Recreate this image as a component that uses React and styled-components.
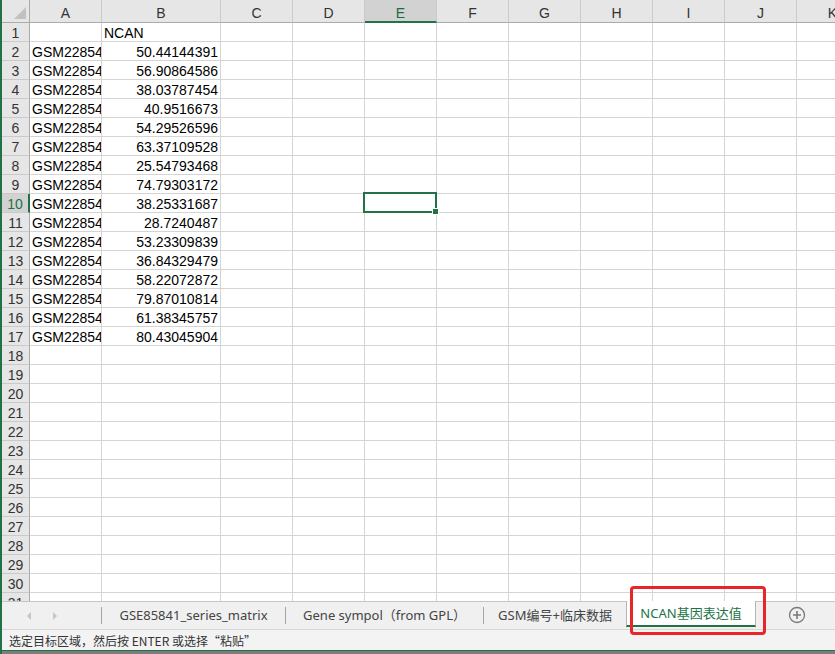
import React from "react"
import styled, { createGlobalStyle } from "styled-components"

const GlobalStyle = createGlobalStyle`
  html, body {
    margin: 0;
    padding: 0;
    overflow: hidden;
    background: #ffffff;
  }
`

const COLS = ["A", "B", "C", "D", "E", "F", "G", "H", "I", "J", "K"]
const WIDTHS = [72, 119, 72, 72, 72, 72, 72, 72, 72, 72, 72]
const ROWS = 31
const ACTIVE_COL = "E"
const ACTIVE_ROW = 10

const values = [
  "50.44144391", "56.90864586", "38.03787454", "40.9516673",
  "54.29526596", "63.37109528", "25.54793468", "74.79303172",
  "38.25331687", "28.7240487", "53.23309839", "36.84329479",
  "58.22072872", "79.87010814", "61.38345757", "80.43045904",
]

const tabs = [
  { name: "GSE85841_series_matrix", width: 184 },
  { name: "Gene sympol（from GPL）", width: 198 },
  { name: "GSM编号+临床数据", width: 143 },
]

const Window = styled.div`
  position: relative;
  width: 835px;
  height: 654px;
  display: flex;
  flex-direction: column;
  border-left: 2px solid #217346;
  box-sizing: border-box;
  font-family: "Liberation Sans", "Noto Sans CJK SC", sans-serif;
  overflow: hidden;
`

const SheetArea = styled.div`
  flex: 1;
  overflow: hidden;
`

const Grid = styled.div`
  display: grid;
  grid-template-columns: 28px ${WIDTHS.map(w => w + "px").join(" ")};
  grid-template-rows: 23px repeat(${ROWS}, 19px);
  width: max-content;
`

const Corner = styled.div`
  position: relative;
  background: #e6e6e6;
  border-right: 1px solid #ababab;
  border-bottom: 1px solid #ababab;
  box-sizing: border-box;

  &::after {
    content: "";
    position: absolute;
    right: 3px;
    bottom: 3px;
    width: 0;
    height: 0;
    border-left: 12px solid transparent;
    border-bottom: 12px solid #c1c1c1;
  }
`

const ColHeader = styled.div`
  display: flex;
  align-items: center;
  justify-content: center;
  padding-top: 4px;
  box-sizing: border-box;
  background: ${p => (p.active ? "#d2d2d2" : "#e6e6e6")};
  color: ${p => (p.active ? "#1e6b40" : "#333")};
  border-right: 1px solid #cacaca;
  border-bottom: ${p => (p.active ? "2px solid #217346" : "1px solid #ababab")};
  font-size: 14px;
`

const RowHeader = styled.div`
  display: flex;
  align-items: center;
  justify-content: center;
  padding-top: 1px;
  box-sizing: border-box;
  background: ${p => (p.active ? "#d2d2d2" : "#e6e6e6")};
  color: ${p => (p.active ? "#217346" : "#333")};
  border-right: ${p => (p.active ? "2px solid #217346" : "1px solid #ababab")};
  border-bottom: 1px solid #cacaca;
  font-size: 14px;
`

const Cell = styled.div`
  position: relative;
  box-sizing: border-box;
  border-right: 1px solid #d4d4d4;
  border-bottom: 1px solid #d4d4d4;
  font-size: 14px;
  line-height: 20px;
  color: #000;
  padding: 0 2px;
  white-space: nowrap;
  overflow: ${p => (p.selected ? "visible" : "hidden")};
  text-align: ${p => (p.align === "right" ? "right" : "left")};
`

const Selection = styled.div`
  position: absolute;
  left: -2px;
  top: -2px;
  right: -1px;
  bottom: -1px;
  border: 2px solid #217346;
  pointer-events: none;
  z-index: 2;

  &::after {
    content: "";
    position: absolute;
    right: -4px;
    bottom: -4px;
    width: 5px;
    height: 5px;
    background: #217346;
    border: 1px solid #fff;
  }
`

const TabBar = styled.div`
  height: 28px;
  display: flex;
  align-items: stretch;
  background: #f0f0f0;
  border-top: 1px solid #c6c6c6;
  box-sizing: border-box;
  font-family: "Noto Sans", "Noto Sans CJK SC", sans-serif;
  font-size: 13px;
`

const NavArrows = styled.div`
  width: 100px;
  display: flex;
  align-items: center;
  gap: 22px;
  padding-left: 25px;
  box-sizing: border-box;
  border-right: 1px solid #a6a6a6;
  margin: 5px 0;
`

const Arrow = styled.span`
  width: 0;
  height: 0;
  border-top: 4px solid transparent;
  border-bottom: 4px solid transparent;
  ${p => (p.left ? "border-right: 4px solid #c6c6c6;" : "border-left: 4px solid #c6c6c6;")}
`

const Tab = styled.div`
  display: flex;
  align-items: center;
  justify-content: center;
  width: ${p => p.width}px;
  box-sizing: border-box;
  margin: 5px 0;
  padding-bottom: 2px;
  color: #444;
  border-right: 1px solid #a6a6a6;
  white-space: nowrap;
`

const ActiveTab = styled.div`
  display: flex;
  align-items: center;
  justify-content: center;
  width: 130px;
  box-sizing: border-box;
  padding-bottom: 1px;
  margin: -1px 0 2px -1px;
  background: #ffffff;
  color: #217346;
  border-left: 1px solid #b5b5b5;
  border-right: 1px solid #b5b5b5;
  border-bottom: 2px solid #217346;
  white-space: nowrap;
`

const AddButton = styled.div`
  margin-left: 32px;
  padding-bottom: 1px;
  display: flex;
  align-items: center;
`

const StatusBar = styled.div`
  height: 22px;
  display: flex;
  align-items: center;
  padding-left: 7px;
  background: #f3f3f3;
  border-top: 1px solid #d6d6d6;
  border-bottom: 1px solid #217346;
  box-sizing: border-box;
  font-family: "Noto Sans CJK SC", sans-serif;
  font-size: 12px;
  color: #333;
`

const BottomEdge = styled.div`
  height: 3px;
  background: #7d7d7d;
`

const Highlight = styled.div`
  position: absolute;
  left: 628px;
  top: 586px;
  width: 136px;
  height: 49px;
  border: 3px solid #e8262a;
  border-radius: 4px;
  box-sizing: border-box;
  pointer-events: none;
`

function cellContent(row, col) {
  if (row === 1 && col === "B") return { text: "NCAN", align: "left" }
  if (row >= 2 && row <= 17) {
    if (col === "A") return { text: "GSM2285" + (4400 + row), align: "left" }
    if (col === "B") return { text: values[row - 2], align: "right" }
  }
  return { text: "", align: "left" }
}

export default function App() {
  const cells = []
  cells.push(<Corner key="corner" />)
  COLS.forEach(c =>
    cells.push(
      <ColHeader key={"h" + c} active={c === ACTIVE_COL}>
        {c}
      </ColHeader>
    )
  )
  for (let r = 1; r <= ROWS; r++) {
    cells.push(
      <RowHeader key={"r" + r} active={r === ACTIVE_ROW}>
        {r}
      </RowHeader>
    )
    COLS.forEach(c => {
      const { text, align } = cellContent(r, c)
      const selected = r === ACTIVE_ROW && c === ACTIVE_COL
      cells.push(
        <Cell key={c + r} align={align} selected={selected}>
          {text}
          {selected && <Selection />}
        </Cell>
      )
    })
  }

  return (
    <>
      <GlobalStyle />
      <Window>
        <SheetArea>
          <Grid>{cells}</Grid>
        </SheetArea>
        <TabBar>
          <NavArrows>
            <Arrow left />
            <Arrow />
          </NavArrows>
          {tabs.map(t => (
            <Tab key={t.name} width={t.width}>{t.name}</Tab>
          ))}
          <ActiveTab>NCAN基因表达值</ActiveTab>
          <AddButton>
            <svg width="18" height="18" viewBox="0 0 18 18">
              <circle cx="9" cy="9" r="7.5" fill="none" stroke="#7a7a7a" strokeWidth="1.3" />
              <path d="M9 5v8M5 9h8" stroke="#7a7a7a" strokeWidth="1.6" />
            </svg>
          </AddButton>
        </TabBar>
        <StatusBar>选定目标区域，然后按 ENTER 或选择“粘贴”</StatusBar>
        <BottomEdge />
        <Highlight />
      </Window>
    </>
  )
}
